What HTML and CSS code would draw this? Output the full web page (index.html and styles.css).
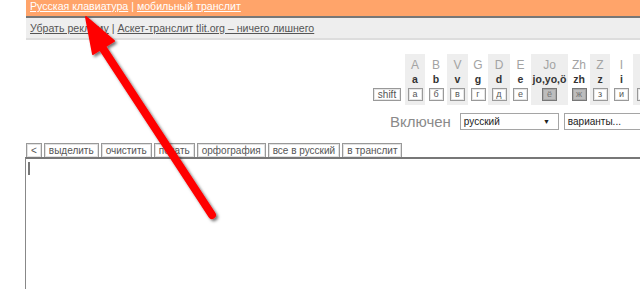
FILE: index.html
```html
<!DOCTYPE html>
<html lang="ru">
<head>
    <meta charset="UTF-8">
    <title>Русская клавиатура</title>
    <link rel="stylesheet" href="styles.css">
</head>
<body>
    <div class="page">
        <div class="topbar">
            <a href="#">Русская клавиатура</a> | <a href="#">мобильный транслит</a>
        </div>
        <div class="adbar">
            <a href="#">Убрать рекламу</a> | <a href="#">Аскет-транслит tlit.org – ничего лишнего</a>
        </div>

        <div class="keyboard">
            <div class="col col-shift"><span class="cap"></span><span class="low"></span><span class="key key-wide">shift</span></div>
            <div class="col shade" style="width:20px"><span class="cap">A</span><span class="low">a</span><span class="key">а</span></div>
            <div class="col" style="width:22px"><span class="cap">B</span><span class="low">b</span><span class="key">б</span></div>
            <div class="col shade" style="width:21px"><span class="cap">V</span><span class="low">v</span><span class="key">в</span></div>
            <div class="col" style="width:20px"><span class="cap">G</span><span class="low">g</span><span class="key">г</span></div>
            <div class="col shade" style="width:22px"><span class="cap">D</span><span class="low">d</span><span class="key">д</span></div>
            <div class="col" style="width:21px"><span class="cap">E</span><span class="low">e</span><span class="key">е</span></div>
            <div class="col shade" style="width:37px"><span class="cap">Jo</span><span class="low">jo,yo,ö</span><span class="key pressed">ё</span></div>
            <div class="col" style="width:22px"><span class="cap">Zh</span><span class="low">zh</span><span class="key pressed">ж</span></div>
            <div class="col shade" style="width:20px"><span class="cap">Z</span><span class="low">z</span><span class="key">з</span></div>
            <div class="col" style="width:23px"><span class="cap">I</span><span class="low">i</span><span class="key">и</span></div>
            <div class="col shade" style="width:22px"><span class="cap">J</span><span class="low">j</span><span class="key">й</span></div>
        </div>

        <div class="status">
            <span class="status-label">Включен</span>
            <div class="select select-lang">русский<span class="arrow">▼</span></div>
            <div class="select select-var">варианты...</div>
        </div>

        <div class="toolbar">
            <button class="tbtn">&lt;</button>
            <button class="tbtn">выделить</button>
            <button class="tbtn">очистить</button>
            <button class="tbtn">печать</button>
            <button class="tbtn">орфография</button>
            <button class="tbtn">все в русский</button>
            <button class="tbtn">в транслит</button>
        </div>
        <div class="editor"><span class="caret"></span></div>
    </div>

    <svg class="arrow-note" width="640" height="289" viewBox="0 0 640 289">
        <defs>
            <filter id="shadow" x="-20%" y="-20%" width="140%" height="140%">
                <feDropShadow dx="2" dy="2" stdDeviation="1.6" flood-color="#000" flood-opacity="0.55"/>
            </filter>
        </defs>
        <g filter="url(#shadow)" fill="#ff0000" stroke="#ff0000">
            <line x1="212" y1="215" x2="100" y2="44" stroke-width="8" stroke-linecap="round"/>
            <polygon points="86,17 114,41 93,54" stroke-width="2" stroke-linejoin="round"/>
        </g>
    </svg>
</body>
</html>
```

FILE: styles.css
```css
body {
    margin: 0;
    font-family: "Liberation Sans", Arial, sans-serif;
    background: #fff;
    overflow: hidden;
}

.page {
    margin-left: 25px;
    height: 289px;
    overflow: hidden;
}

.topbar {
    height: 16px;
    line-height: 13px;
    padding-left: 4px;
    background-color: #ffa46a;
    border-bottom: 2px solid #777;
    color: #fff;
    font-size: 10.6px;
    margin-left: 1px;
}

.topbar a {
    color: #fff;
}

.adbar {
    height: 20px;
    line-height: 21px;
    padding-left: 4px;
    margin-left: 1px;
    background-color: #eee;
    border-bottom: 2px solid #ddd;
    color: #555;
    font-size: 10.6px;
}

.adbar a {
    color: #555;
}

/* keyboard */
.keyboard {
    display: flex;
    margin-top: 14px;
    margin-left: 348px;
    width: 400px;
}

.col {
    display: flex;
    flex-direction: column;
    align-items: center;
    padding: 4px 0 4px;
    flex-shrink: 0;
}

.col-shift {
    width: 32px;
    align-items: flex-start;
}

.shade {
    background-color: #eee;
}

.cap {
    height: 14px;
    line-height: 14px;
    font-size: 12px;
    color: #a3a3a3;
}

.low {
    height: 14px;
    line-height: 14px;
    font-size: 10.5px;
    font-weight: bold;
    color: #333;
    white-space: nowrap;
}

.key {
    margin-top: 2px;
    width: 13px;
    height: 11px;
    line-height: 11px;
    border: 1px solid #999;
    box-shadow: inset 0 0 0 1px #e6e6e6;
    background: #fff;
    font-size: 9px;
    color: #555;
    text-align: center;
}

.key-wide {
    width: 26px;
    font-size: 10px;
}

.key.pressed {
    background: #bdbdbd;
    border-color: #777;
    box-shadow: inset 0 0 0 1px #a9a9a9;
    color: #777;
}

/* status line */
.status {
    display: flex;
    align-items: center;
    gap: 5px;
    margin-top: 8px;
    margin-left: 365px;
    height: 17px;
    white-space: nowrap;
}

.status-label {
    font-size: 15px;
    color: #8a8a8a;
    margin-right: 4px;
}

.select {
    position: relative;
    height: 15px;
    line-height: 15px;
    border: 1px solid #a5a5a5;
    background: #fff;
    font-size: 10px;
    color: #222;
    padding-left: 3px;
    flex-shrink: 0;
}

.select-lang {
    width: 94px;
}

.select-var {
    width: 120px;
}

.arrow {
    position: absolute;
    right: 8px;
    top: 0;
    font-size: 7px;
    color: #222;
}

/* toolbar + editor */
.toolbar {
    display: flex;
    gap: 2px;
    margin-top: 13px;
    margin-left: 1px;
}

.tbtn {
    height: 14px;
    margin: 0;
    padding: 0 4px;
    border: 1px solid #999;
    border-bottom: none;
    box-shadow: inset 0 0 0 1px #e2e2e2;
    background: #fff;
    font-family: "Liberation Sans", Arial, sans-serif;
    font-size: 10px;
    line-height: 12px;
    color: #555;
}

.editor {
    height: 140px;
    border-top: 2px solid #777;
    border-left: 1px solid #888;
    background: #fff;
}

.caret {
    display: block;
    width: 2px;
    height: 13px;
    margin: 3px 0 0 2px;
    background: #777;
}

.arrow-note {
    position: absolute;
    left: 0;
    top: 0;
    pointer-events: none;
}
```
